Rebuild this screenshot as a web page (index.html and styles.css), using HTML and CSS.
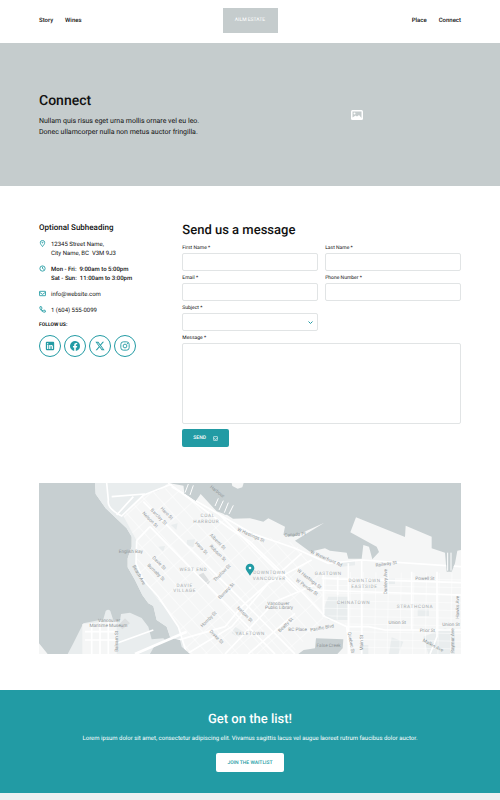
FILE: index.html
```html
<!DOCTYPE html>
<html lang="en">
<head>
    <meta charset="UTF-8">
    <meta name="viewport" content="width=device-width, initial-scale=1.0">
    <title>Connect</title>
    <link rel="stylesheet" href="styles.css">
</head>
<body>

<header class="site-header">
    <nav class="nav">
        <a href="#">Story</a>
        <a href="#">Wines</a>
    </nav>
    <a class="logo" href="#">AILM ESTATE</a>
    <nav class="nav nav-right">
        <a href="#">Place</a>
        <a href="#">Connect</a>
    </nav>
</header>

<section class="hero">
    <div class="hero-text">
        <h1>Connect</h1>
        <p>Nullam quis risus eget urna mollis ornare vel eu leo.<br>Donec ullamcorper nulla non metus auctor fringilla.</p>
    </div>
    <div class="hero-image">
        <svg width="12" height="10" viewBox="0 0 24 20">
            <rect width="24" height="20" rx="3" fill="#fff"/>
            <path d="M3 3h18v13l-5-6-4 3-3-2-6 4z" fill="#c5cccd"/>
            <circle cx="7" cy="7" r="2" fill="#fff"/>
        </svg>
    </div>
</section>

<main class="content">
    <aside class="contact">
        <h3>Optional Subheading</h3>
        <ul class="details">
            <li>
                <svg class="icon" viewBox="0 0 16 16"><path d="M8 15C5 11 3 9 3 6a5 5 0 0 1 10 0c0 3-2 5-5 9z"/><circle cx="8" cy="6" r="1"/></svg>
                <span>12345 Street Name,<br>City Name, BC&nbsp; V3M 9J3</span>
            </li>
            <li class="hours">
                <svg class="icon" viewBox="0 0 16 16"><circle cx="8" cy="8" r="6"/><path d="M8 4v4l3 2"/></svg>
                <span>Mon - Fri:&nbsp; 9:00am to 5:00pm<br>Sat - Sun:&nbsp; 11:00am to 3:00pm</span>
            </li>
            <li>
                <svg class="icon" viewBox="0 0 16 16"><rect x="1" y="3" width="14" height="10" rx="1"/><path d="M1 5l7 5 7-5"/></svg>
                <span>info@website.com</span>
            </li>
            <li>
                <svg class="icon" viewBox="0 0 16 16"><path d="M2 2l3-1 2 4-2 2c1 2 2 3 4 4l2-2 4 2-1 3C8 15 1 8 2 2z"/></svg>
                <span>1 (604) 555-0099</span>
            </li>
        </ul>
        <h4>FOLLOW US:</h4>
        <div class="social">
            <a href="#" aria-label="LinkedIn">
                <svg viewBox="0 0 24 24"><path fill-rule="evenodd" d="M4 2h16a2 2 0 0 1 2 2v16a2 2 0 0 1-2 2H4a2 2 0 0 1-2-2V4a2 2 0 0 1 2-2zM5 9.500V19h3V9.500zM6.500 4.800a1.700 1.700 0 1 0 0 3.400 1.700 1.700 0 0 0 0-3.400zM10 9.500V19h3v-5c0-3 3-3 3 0v5h3v-5.500c0-4.500-4.500-5.200-6.100-2.600V9.500z"/></svg>
            </a>
            <a href="#" aria-label="Facebook">
                <svg viewBox="0 0 24 24"><path d="M24 12a12 12 0 1 0-13.900 11.900v-8.400H7.100V12h3V9.400c0-3 1.800-4.700 4.600-4.700 1.300 0 2.700.2 2.700.2v3h-1.500c-1.500 0-2 .9-2 1.900V12h3.400l-.5 3.500h-2.900v8.400A12 12 0 0 0 24 12z"/></svg>
            </a>
            <a href="#" aria-label="X">
                <svg viewBox="0 0 24 24"><path fill-rule="evenodd" d="M18.300 2h3.400l-7.400 8.400L23 22h-6.800l-5.300-7-6.100 7H1.400l7.900-9L1 2h7l4.800 6.400zm-1.200 18H19L6.900 3.900h-2z"/></svg>
            </a>
            <a href="#" aria-label="Instagram">
                <svg viewBox="0 0 24 24"><g fill="none" stroke="currentColor" stroke-width="2.200"><rect x="2" y="2" width="20" height="20" rx="6"/><circle cx="12" cy="12" r="4.500"/></g><circle cx="17.800" cy="6.200" r="1.400"/></svg>
            </a>
        </div>
    </aside>

    <form class="message-form">
        <h2>Send us a message</h2>
        <div class="fields">
            <div class="field">
                <label for="first-name">First Name *</label>
                <input type="text" id="first-name">
            </div>
            <div class="field">
                <label for="last-name">Last Name *</label>
                <input type="text" id="last-name">
            </div>
            <div class="field">
                <label for="email">Email *</label>
                <input type="email" id="email">
            </div>
            <div class="field">
                <label for="phone">Phone Number *</label>
                <input type="tel" id="phone">
            </div>
            <div class="field">
                <label for="subject">Subject *</label>
                <div class="select">
                    <select id="subject"><option value=""></option></select>
                    <svg viewBox="0 0 10 6"><path d="M1 1l4 4 4-4"/></svg>
                </div>
            </div>
            <div class="field wide">
                <label for="message">Message *</label>
                <textarea id="message"></textarea>
            </div>
        </div>
        <button class="send" type="button">
            SEND
            <svg viewBox="0 0 16 16"><rect x="1" y="2" width="14" height="12" rx="2"/><path d="M1 6l7 5 7-5"/></svg>
        </button>
    </form>
</main>

<section class="map">
    <svg viewBox="12 9 1266 513">
        <defs>
            <pattern id="grid-west" width="34" height="52" patternUnits="userSpaceOnUse" patternTransform="rotate(-42)">
                <path d="M0 0H34M0 0V52"/>
            </pattern>
            <pattern id="grid-east" width="38" height="23" patternUnits="userSpaceOnUse" patternTransform="rotate(1)">
                <path d="M0 0H38M0 0V23"/>
            </pattern>
            <clipPath id="land">
                <path d="M180 9H400L450 18V42L482 64L497 42L545 94L578 106L594 116L645 115L685 125L700 115L750 140L745 165L775 170L868 128L780 182L825 215L870 205L885 212L935 218L940 236L980 236L985 195L1002 200L1012 238L1032 216L1025 200L946 157L963 112L1110 171L1112 137L1190 170V205L1230 218L1235 275H1250L1260 250L1267 212L1278 210V522H440L430 480L405 470L395 440L365 420L355 378L340 370L322 345L300 300L278 262V235L290 200V170L275 145L212 85L182 42Z"/>
            </clipPath>
        </defs>

        <!-- land -->
        <path class="land" d="M180 9H400L450 18V42L482 64L497 42L545 94L578 106L594 116L645 115L685 125L700 115L750 140L745 165L775 170L868 128L780 182L825 215L870 205L885 212L935 218L940 236L980 236L985 195L1002 200L1012 238L1032 216L1025 200L946 157L963 112L1110 171L1112 137L1190 170V205L1230 218L1235 275H1250L1260 250L1267 212L1278 210V522H440L430 480L405 470L395 440L365 420L355 378L340 370L322 345L300 300L278 262V235L290 200V170L275 145L212 85L182 42Z"/>
        <path class="park" d="M180 9H400L370 32L325 46L265 108L305 182L303 250L325 300L370 350L430 440L455 522H440L430 480L405 470L395 440L365 420L355 378L340 370L322 345L300 300L278 262V235L290 200V170L275 145L212 85L182 42Z"/>
        <path class="park" d="M98 522L115 490L145 430L205 418L212 393Q220 385 226 393L234 418L255 422L258 402L285 398L320 414L340 440L350 478L385 475L400 490L345 522Z"/>
        <path class="land" d="M142 432L245 420V522H142Z"/>
        <path class="land" d="M590 9H626L622 22L608 26L592 18ZM12 490L38 522H12Z"/>

        <!-- blocks and small greens -->
        <g class="park">
            <path d="M456 180L480 178L475 202L455 195ZM370 200L390 198L385 215ZM408 135L428 130L424 150ZM600 440L625 455L608 470L590 460Z"/>
            <path d="M880 350H942V420H880L860 400ZM1148 388H1182V408H1148ZM1060 295H1080V312H1060ZM1165 470L1230 445L1260 455V522H1180ZM1070 472L1105 485L1090 522H1062ZM980 495H1000V522H980ZM920 245L960 240V256L920 260Z"/>
        </g>
        <path class="block" d="M490 285L505 278L525 305L515 318ZM270 415L285 430L262 448L250 436Z"/>

        <!-- streets -->
        <g clip-path="url(#land)">
            <path fill="url(#grid-west)" d="M265 108L325 46L410 20L650 160L780 190L860 300L865 420L770 522H455L430 440L325 300L303 250L305 182Z"/>
            <path fill="url(#grid-east)" d="M865 275L1278 280V522H940L930 430L865 400Z"/>
            <g class="road">
                <path d="M215 9L220 60Q215 85 260 108L325 46L410 12"/>
                <path d="M230 50L330 42M245 105L295 50"/>
                <path d="M400 9L590 150L645 185L800 335L870 410L935 440L945 522"/>
                <path d="M410 20L650 160L780 205L880 250L980 240L1278 260"/>
                <path d="M305 182L303 250L325 300L370 350L430 440L455 522M305 182L345 140"/>
                <path d="M860 295L1278 308M830 330L1278 345M865 275V410M908 290V345"/>
                <path d="M980 240V522M940 250V522M935 440H1000L1050 450H1278M1130 275V450M1206 275V470L1185 522"/>
                <path d="M395 490L570 440L620 380L800 220M455 522L590 440L700 310L830 240M570 522L720 365L850 310M640 522L780 400"/>
                <path d="M345 140L720 522M325 65L645 385L780 522M555 105L790 335"/>
            </g>
        </g>
        <path class="road" d="M245 490L355 450M150 455H245M150 480H245M170 430V522M195 425V522M220 423V522"/>
        <path class="water" d="M790 522L806 510L840 505L843 475L925 478L923 505L907 522Z"/>

        <!-- shoreline docks -->
        <path class="water" d="M445 12H500L515 30L505 45L490 28L478 60L465 35L448 42ZM540 52L608 78L600 110L578 96L570 106L560 90L548 92L535 80Z"/>
        <path class="piers" d="M460 12L450 38M475 16L465 45M550 55L540 78M565 62L552 90M580 68L568 98M595 76L582 102M1238 218V272M1248 218V272"/>
        <path class="water" d="M345 522L360 495L400 475L435 480L440 500L465 522Z"/>
        <path class="road bridge" d="M300 522L455 455"/>

        <!-- districts -->
        <g class="district">
            <text x="518" y="111">COAL</text>
            <text x="514" y="129">HARBOUR</text>
            <text x="475" y="273">WEST END</text>
            <text x="449" y="321">DAVIE</text>
            <text x="449" y="337">VILLAGE</text>
            <text x="703" y="283">DOWNTOWN</text>
            <text x="703" y="300">VANCOUVER</text>
            <text x="880" y="285">GASTOWN</text>
            <text x="989" y="307">DOWNTOWN</text>
            <text x="988" y="324">EASTSIDE</text>
            <text x="956" y="373">CHINATOWN</text>
            <text x="1140" y="385">STRATHCONA</text>
            <text x="646" y="464">YALETOWN</text>
        </g>

        <!-- street names -->
        <g class="street">
            <text transform="translate(392 103) rotate(45)">Haro St</text>
            <text transform="translate(368 113) rotate(45)">Barclay St</text>
            <text transform="translate(342 122) rotate(45)">Nelson St</text>
            <text transform="translate(545 188) rotate(45)">Alberni St</text>
            <text transform="translate(545 222) rotate(45)">Robson St</text>
            <text transform="translate(496 207) rotate(45)">Haro St</text>
            <text transform="translate(369 252) rotate(45)">Davie St</text>
            <text transform="translate(360 280) rotate(45)">Burnaby St</text>
            <text transform="translate(308 287) rotate(60)">Beach Ave</text>
            <text transform="translate(564 282) rotate(-45)">Thurlow St</text>
            <text transform="translate(577 336) rotate(-45)">Burrard St</text>
            <text transform="translate(524 421) rotate(-45)">Hornby St</text>
            <text transform="translate(541 474) rotate(45)">Drake St</text>
            <text transform="translate(626 406) rotate(45)">Nelson St</text>
            <text transform="translate(646 169) rotate(24)">W Hastings St</text>
            <text transform="translate(780 168) rotate(-4)">Canada Pl</text>
            <text transform="translate(872 240) rotate(24)">W Waterfront Rd</text>
            <text transform="translate(820 300) rotate(38)">W Hastings St</text>
            <text transform="translate(813 325) rotate(35)">W Pender St</text>
            <text transform="translate(755 438) rotate(-45)">Beatty St</text>
            <text transform="translate(862 448) rotate(-10)">Pacific Blvd</text>
            <text transform="translate(1054 256) rotate(-8)">Railway St</text>
            <text transform="translate(1057 305) rotate(-90)">Dunlevy Ave</text>
            <text x="1170" y="301">Powell St</text>
            <text x="1087" y="433">Union St</text>
            <text x="1248" y="437">Union St</text>
            <text x="1177" y="457">Prior St</text>
            <text transform="translate(1192 500) rotate(28)">Malkin Ave</text>
            <text transform="translate(1258 482) rotate(-90)">Raymur Ave</text>
            <text transform="translate(1273 382) rotate(-90)">Hawks Ave</text>
            <text transform="translate(983 488) rotate(-90)">Main St</text>
            <text transform="translate(944 488) rotate(80)">Quebec St</text>
            <text transform="translate(248 484) rotate(-90)">Balsam St</text>
            <text transform="translate(544 38) rotate(38)">Harbour</text>
            <text x="287" y="220">English Bay</text>
            <text x="222" y="427">Vancouver</text>
            <text x="220" y="441">Maritime Museum</text>
            <text x="730" y="374">Vancouver</text>
            <text x="732" y="388">Public Library</text>
            <text x="788" y="454">BC Place</text>
            <text x="881" y="502">False Creek</text>
        </g>

        <!-- marker -->
        <path class="pin" d="M645 287C637 275 632 270 632 264a13 13 0 0 1 26 0c0 6-5 11-13 23z"/>
        <circle cx="645" cy="264" r="4" fill="#fff"/>
    </svg>
</section>

<section class="waitlist">
    <h2>Get on the list!</h2>
    <p>Lorem ipsum dolor sit amet, consectetur adipiscing elit. Vivamus sagittis lacus vel augue laoreet rutrum faucibus dolor auctor.</p>
    <button type="button">JOIN THE WAITLIST</button>
</section>

</body>
</html>
```
FILE: styles.css
```css
* {
    box-sizing: border-box;
}

body {
    margin: 0;
    font-family: Roboto, "Liberation Sans", sans-serif;
    font-size: 6px;
    color: #111;
    background-color: #eeeff0;
    text-rendering: geometricPrecision;
}

h1, h2, h3, h4, p, ul {
    margin: 0;
    padding: 0;
}

a {
    color: inherit;
    text-decoration: none;
}

button, input, select, textarea {
    font: inherit;
    text-rendering: inherit;
}

.site-header {
    display: grid;
    grid-template-columns: 1fr 55px 1fr;
    align-items: center;
    padding: 8px 39px 10px;
    background-color: #fff;
}

.nav {
    display: flex;
    gap: 12px;
    font-size: 6px;
    line-height: 8px;
    font-weight: 500;
}

.nav-right {
    justify-content: flex-end;
}

.logo {
    height: 25px;
    line-height: 25px;
    text-align: center;
    font-size: 5px;
    color: #fff;
    background-color: #c5cccd;
}

.hero {
    display: grid;
    grid-template-columns: 1fr 1fr;
    column-gap: 4px;
    align-items: center;
    height: 143px;
    padding: 0 39px;
    background-color: #c5cccd;
}

.hero h1 {
    font-size: 14px;
    line-height: 18px;
    font-weight: 500;
    margin-bottom: 6px;
}

.hero p {
    font-size: 7px;
    line-height: 11px;
    white-space: nowrap;
}

.hero-image {
    display: flex;
    justify-content: center;
}

.content {
    display: grid;
    grid-template-columns: 1fr 2fr;
    gap: 4px;
    padding: 36px 39px;
    background-color: #fff;
}

.contact h3 {
    font-size: 8px;
    line-height: 11px;
    font-weight: 500;
    margin-bottom: 7px;
}

.details {
    list-style: none;
    display: flex;
    flex-direction: column;
    gap: 7px;
    line-height: 9px;
}

.details li {
    display: flex;
    gap: 5px;
}

.hours {
    font-weight: 500;
}

.icon {
    width: 7px;
    height: 7px;
    fill: none;
    stroke: #229ba4;
    stroke-width: 2;
}

.contact h4 {
    font-size: 5px;
    line-height: 6px;
    font-weight: 700;
    margin: 7px 0;
}

.social {
    display: flex;
    gap: 3px;
}

.social a {
    display: flex;
    align-items: center;
    justify-content: center;
    width: 22px;
    height: 22px;
    border: 1px solid #229ba4;
    border-radius: 50%;
    color: #229ba4;
}

.social svg {
    width: 10px;
    height: 10px;
    fill: currentColor;
}

.message-form h2 {
    font-size: 13px;
    line-height: 17px;
    font-weight: 500;
    margin-bottom: 6px;
}

.fields {
    display: grid;
    grid-template-columns: 1fr 1fr;
    gap: 4px 7px;
}

.field label {
    display: block;
    font-size: 5px;
    line-height: 6px;
    margin-bottom: 2px;
}

.field input, .field select, .field textarea {
    display: block;
    width: 100%;
    height: 18px;
    padding: 2px 4px;
    border: 1px solid #e1e4e5;
    border-radius: 2px;
    background-color: #fff;
}

.field select {
    appearance: none;
}

.field textarea {
    height: 81px;
    resize: none;
}

.wide {
    grid-column: 1 / -1;
}

.select {
    position: relative;
}

.select svg {
    position: absolute;
    right: 5px;
    top: 8px;
    width: 5px;
    height: 3px;
    fill: none;
    stroke: #229ba4;
    stroke-width: 2;
}

.send {
    display: flex;
    align-items: center;
    gap: 7px;
    height: 18px;
    margin-top: 5px;
    padding: 0 11px;
    border: 0;
    border-radius: 2px;
    font-size: 5px;
    font-weight: 500;
    color: #fff;
    background-color: #229ba4;
}

.send svg {
    width: 5px;
    height: 5px;
    fill: none;
    stroke: #fff;
    stroke-width: 2;
}

.map {
    padding: 0 39px 36px;
    background-color: #fff;
}

.map svg {
    display: block;
    width: 100%;
    background-color: #c7cfd1;
}

.land {
    fill: #f5f6f6;
}

.park {
    fill: #e9edee;
}

.block {
    fill: #dcdfe0;
}

.water {
    fill: #c7cfd1;
}

pattern path, .road, .piers {
    fill: none;
    stroke: #fff;
    stroke-width: 3;
}

.road {
    stroke-width: 5;
}

.bridge {
    stroke-width: 8;
}

.district, .street {
    font-size: 14px;
    text-anchor: middle;
    fill: #8f9597;
}

.district {
    letter-spacing: 2px;
    fill: #a9aeb0;
}

.pin {
    fill: #229ba4;
}

.waitlist {
    padding: 21px 39px;
    text-align: center;
    color: #fff;
    background-color: #229ba4;
}

.waitlist h2 {
    font-size: 13px;
    line-height: 18px;
    font-weight: 500;
    margin-bottom: 5px;
}

.waitlist p {
    font-size: 6px;
    line-height: 10px;
    margin-bottom: 9px;
}

.waitlist button {
    height: 19px;
    padding: 0 11px;
    border: 0;
    border-radius: 2px;
    font-size: 5px;
    font-weight: 500;
    color: #229ba4;
    background-color: #fff;
}
```
